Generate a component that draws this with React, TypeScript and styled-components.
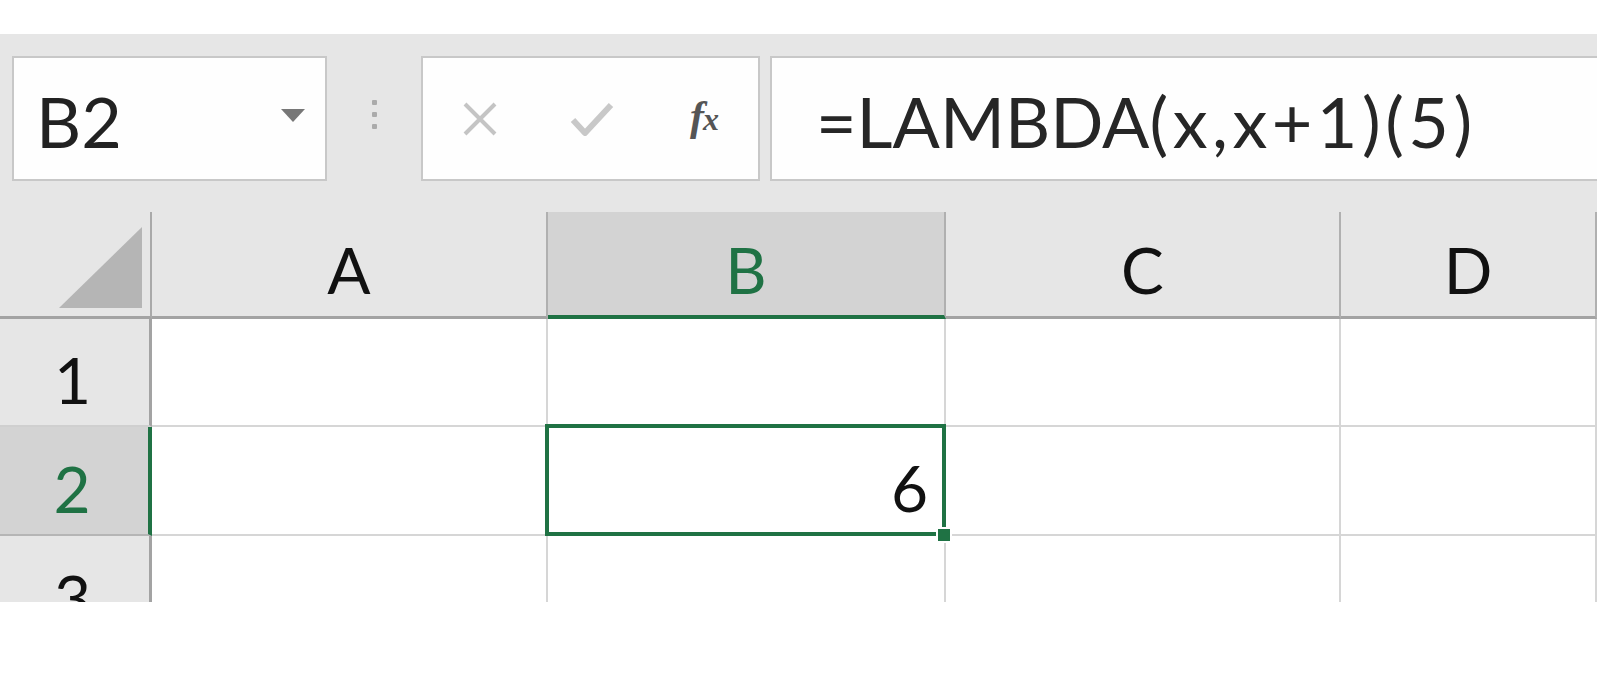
import React from "react";
import styled, { createGlobalStyle, css } from "styled-components";

const GREEN = "#1f7244";

const GlobalStyle = createGlobalStyle`
  html, body { margin: 0; padding: 0; background: #ffffff; }
  body { font-family: "Lato", "Liberation Sans", sans-serif; }
  * { box-sizing: border-box; }
`;

const Page = styled.div`
  width: 1597px;
  height: 686px;
  padding-top: 34px;
  display: flex;
  flex-direction: column;
  overflow: hidden;
`;

const FormulaBar = styled.div`
  height: 178px;
  background: #e6e6e6;
  padding: 22px 0 31px 12px;
  display: flex;
  align-items: stretch;
`;

const Box = styled.div`
  background: #fefefe;
  border: 2px solid #c8c8c8;
  display: flex;
  align-items: center;
`;

const NameBox = styled(Box)`
  width: 315px;
  padding: 0 20px 0 22px;
  justify-content: space-between;
`;

const NameText = styled.span`
  font-size: 70px;
  color: #222;
  line-height: 1;
  padding-top: 4px;
`;

const DropArrow = styled.span`
  width: 0;
  height: 0;
  border-left: 12px solid transparent;
  border-right: 12px solid transparent;
  border-top: 13px solid #777;
  margin-top: -6px;
`;

const Separator = styled.div`
  width: 94px;
  display: flex;
  flex-direction: column;
  align-items: center;
  justify-content: center;
  gap: 7px;
  padding-bottom: 8px;
`;

const Dot = styled.span`
  width: 5px;
  height: 5px;
  border-radius: 1px;
  background: #ababab;
`;

const ButtonsBox = styled(Box)`
  width: 339px;
  padding-left: 22px;
  gap: 42px;
`;

const IconSlot = styled.span`
  width: 70px;
  height: 60px;
  display: flex;
  align-items: center;
  justify-content: center;
`;

const Fx = styled.span`
  font-family: "Liberation Serif", "DejaVu Serif", serif;
  font-style: italic;
  font-weight: 700;
  font-size: 42px;
  color: #555;
  letter-spacing: -1px;
  margin-top: -6px;
  span { font-size: 32px; }
`;

const FormulaBox = styled(Box)`
  flex: 1;
  margin-left: 10px;
  border-right: none;
  padding-left: 44px;
`;

const FormulaText = styled.span`
  font-size: 70px;
  color: #262626;
  line-height: 1;
  padding-top: 4px;
  white-space: nowrap;
`;

const Args = styled.span`
  letter-spacing: 4.5px;
`;

const Sheet = styled.div`
  height: 390px;
  overflow: hidden;
  display: grid;
  grid-template-columns: 152px 396px 398px 395px 1fr;
  grid-template-rows: 107px 108px 109px 109px;
`;

const Corner = styled.div`
  background: #e6e6e6;
  border-right: 2px solid #a9a9a9;
  border-bottom: 3px solid #a3a3a3;
  display: flex;
  align-items: flex-end;
  justify-content: flex-end;
  padding: 0 8px 8px 0;
`;

const ColHead = styled.div<{ $active?: boolean }>`
  background: ${(p) => (p.$active ? "#d3d3d3" : "#e6e6e6")};
  color: ${(p) => (p.$active ? GREEN : "#111")};
  border-right: 2px solid #b0b0b0;
  border-bottom: 3px solid ${(p) => (p.$active ? GREEN : "#a3a3a3")};
  ${(p) =>
    p.$active &&
    css`
      border-bottom-width: 4px;
    `}
  display: flex;
  align-items: center;
  justify-content: center;
  font-size: 64px;
  line-height: 1;
  padding-top: 12px;
`;

const RowHead = styled.div<{ $active?: boolean }>`
  background: ${(p) => (p.$active ? "#d3d3d3" : "#e6e6e6")};
  color: ${(p) => (p.$active ? GREEN : "#111")};
  border-right: ${(p) => (p.$active ? `4px solid ${GREEN}` : "3px solid #a3a3a3")};
  border-bottom: 2px solid ${(p) => (p.$active ? "#b5b5b5" : "#cfcfcf")};
  display: flex;
  align-items: center;
  justify-content: center;
  font-size: 64px;
  line-height: 1;
  padding-top: 16px;
  padding-right: 4px;
`;

const Cell = styled.div`
  background: #fff;
  border-right: 2px solid #d6d6d6;
  border-bottom: 2px solid #d6d6d6;
  position: relative;
  display: flex;
  align-items: center;
  justify-content: flex-end;
  padding: 14px 16px 0 0;
  font-size: 64px;
  line-height: 1;
  color: #111;
`;

const Selection = styled.div`
  position: absolute;
  top: -3px;
  left: -3px;
  right: -2px;
  bottom: -2px;
  border: 4px solid ${GREEN};
  pointer-events: none;
  z-index: 2;
`;

const FillHandle = styled.span`
  position: absolute;
  right: -10px;
  bottom: -11px;
  width: 16px;
  height: 16px;
  background: ${GREEN};
  border: 2px solid #fff;
`;

const cols = ["A", "B", "C", "D"];
const rows = [1, 2, 3];

export default function App() {
  return (
    <>
      <GlobalStyle />
      <Page>
        <FormulaBar>
          <NameBox>
            <NameText>B2</NameText>
            <DropArrow />
          </NameBox>
          <Separator>
            <Dot />
            <Dot />
            <Dot />
          </Separator>
          <ButtonsBox>
            <IconSlot>
              <svg width="36" height="34" viewBox="0 0 36 34">
                <path d="M3 2 L33 32 M33 2 L3 32" stroke="#c4c4c4" strokeWidth="4" fill="none" />
              </svg>
            </IconSlot>
            <IconSlot>
              <svg width="44" height="34" viewBox="0 0 44 34">
                <path d="M3 18 L15 31 L41 3" stroke="#c8c8c8" strokeWidth="6" fill="none" strokeLinejoin="round" />
              </svg>
            </IconSlot>
            <IconSlot>
              <Fx>
                f<span>x</span>
              </Fx>
            </IconSlot>
          </ButtonsBox>
          <FormulaBox>
            <FormulaText>
              =LAMBDA<Args>(x,x+1)(5)</Args>
            </FormulaText>
          </FormulaBox>
        </FormulaBar>
        <Sheet>
          <Corner>
            <svg width="83" height="81" viewBox="0 0 83 81">
              <polygon points="83,0 83,81 0,81" fill="#b5b5b5" />
            </svg>
          </Corner>
          {cols.map((c) => (
            <ColHead key={c} $active={c === "B"}>
              {c}
            </ColHead>
          ))}
          {rows.map((r) => (
            <React.Fragment key={r}>
              <RowHead $active={r === 2}>{r}</RowHead>
              {cols.map((c) => {
                const sel = r === 2 && c === "B";
                return (
                  <Cell key={c}>
                    {sel && (
                      <>
                        6
                        <Selection>
                          <FillHandle />
                        </Selection>
                      </>
                    )}
                  </Cell>
                );
              })}
            </React.Fragment>
          ))}
        </Sheet>
      </Page>
    </>
  );
}
